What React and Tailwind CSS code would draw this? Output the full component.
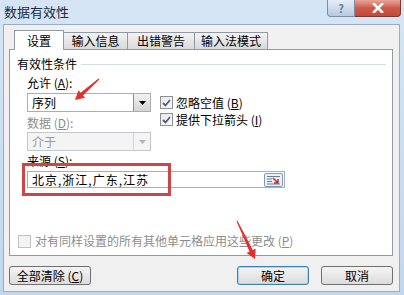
const font = { fontFamily: '"Noto Sans CJK SC", "Liberation Sans", sans-serif' }

function arrowPoints(tx, ty, hx, hy, headLen = 9, headW = 5, tailW = 0.6, neckW = 1.8) {
  const dx = hx - tx
  const dy = hy - ty
  const len = Math.hypot(dx, dy)
  const ux = dx / len
  const uy = dy / len
  const nx = -uy
  const ny = ux
  const bx = hx - ux * headLen
  const by = hy - uy * headLen
  const p = (x, y) => `${x.toFixed(1)},${y.toFixed(1)}`
  return [
    p(tx + nx * tailW, ty + ny * tailW),
    p(bx + nx * neckW, by + ny * neckW),
    p(bx + nx * headW, by + ny * headW),
    p(hx, hy),
    p(bx - nx * headW, by - ny * headW),
    p(bx - nx * neckW, by - ny * neckW),
    p(tx - nx * tailW, ty - ny * tailW),
  ].join(' ')
}

export default function App() {
  return (
    <div
      className="relative w-[404px] h-[295px] flex flex-col bg-gradient-to-b from-[#d6e5f6] to-[#c2d6ee] text-[12px] text-black overflow-hidden"
      style={font}
    >
      <TitleBar />

      <div className="flex-1 ml-[3px] mr-[4px] mb-[3px] border border-[#9aabc2] bg-[#f0f0f0] flex flex-col pl-[5px] pr-[6px]">
        <Tabs />

        <div className="h-[207px] bg-white border border-[#8e9aa6] flex flex-col pl-[7px] pr-[6px]">
          <div className="mt-[7px] flex items-center h-[14px]">
            <span className="leading-[14px]">有效性条件</span>
            <div className="flex-1 ml-[4px] border-t border-[#d5dde4]" />
          </div>

          <div className="pl-[10px] flex">
            <div className="w-[124px] flex flex-col">
              <span className="mt-[5px] leading-[14px] h-[14px]">
                允许 (<u>A</u>):
              </span>
              <Select value="序列" className="mt-[3px]" />
              <span className="mt-[4px] leading-[14px] h-[14px] text-[#8d8d8d]">
                数据 (<u>D</u>):
              </span>
              <Select value="介于" disabled className="mt-[2px]" />
              <span className="mt-[3px] leading-[14px] h-[14px]">
                来源 (<u>S</u>):
              </span>
            </div>
            <div className="ml-[9px] pt-[23px] flex flex-col">
              <Check label="忽略空值" keyChar="B" checked />
              <Check label="提供下拉箭头" keyChar="I" checked />
            </div>
          </div>

          <div className="ml-[10px] mt-[3px] w-[258px] h-[17px] border border-[#abadb3] flex items-center pl-[4px] pr-[1px]">
            <span className="flex-1 leading-[14px] tracking-[1px]">北京,浙江,广东,江苏</span>
            <RefIcon />
          </div>

          <div className="mt-[45px] ml-[1px] flex items-center h-[16px]">
            <span className="w-[13px] h-[13px] border border-[#c2c2c2] bg-[#f4f4f4]" />
            <span className="ml-[4px] leading-[14px] text-[#8d8d8d]">
              对有同样设置的所有其他单元格应用这些更改 (<u>P</u>)
            </span>
          </div>
        </div>

        <div className="mt-[10px] flex items-center">
          <Button className="w-[82px]">
            全部清除 (<u>C</u>)
          </Button>
          <Button className="w-[72px] ml-auto" primary>
            确定
          </Button>
          <Button className="w-[72px] ml-[12px]">取消</Button>
        </div>
      </div>

      {/* annotations */}
      <div className="absolute left-[22px] top-[163px] w-[149px] h-[33px] border-[3px] border-[#cf4547] pointer-events-none" />
      <svg className="absolute inset-0 pointer-events-none" width="404" height="295">
        <polygon points={arrowPoints(99, 79, 75, 100)} fill="#e2302c" />
        <polygon points={arrowPoints(237, 221, 255, 259)} fill="#e2302c" />
      </svg>
    </div>
  )
}

function TitleBar() {
  return (
    <div className="h-[24px] flex items-start shrink-0">
      <span className="ml-[4px] mt-[5px] leading-[14px] text-[13px] text-[#1e2a3a]">数据有效性</span>
      <div className="ml-auto mr-[3px] flex">
        <div className="w-[28px] h-[17px] rounded-bl-[4px] border border-t-0 border-[#7d8ea5] bg-gradient-to-b from-[#e6eef8] to-[#b8c9de] flex items-center justify-center">
          <span className="text-[11px] leading-none font-bold text-[#6c7c90]">?</span>
        </div>
        <div className="w-[46px] h-[17px] rounded-br-[4px] border border-t-0 border-l-0 border-[#7a3b33] bg-gradient-to-b from-[#e6a59b] via-[#cc5a4a] to-[#c4493a] flex items-center justify-center">
          <svg width="12" height="10" viewBox="0 0 12 10">
            <path d="M2 1 L10 9 M10 1 L2 9" stroke="#ffffff" strokeWidth="2.6" strokeLinecap="square" />
          </svg>
        </div>
      </div>
    </div>
  )
}

function Tabs() {
  const tabs = [
    { label: '设置', w: 'w-[50px]', active: true },
    { label: '输入信息', w: 'w-[65px]' },
    { label: '出错警告', w: 'w-[68px]' },
    { label: '输入法模式', w: 'w-[74px]' },
  ]
  return (
    <div className="mt-[5px] h-[20px] flex items-end pl-[5px] -mb-px relative z-10">
      {tabs.map((t, i) =>
        t.active ? (
          <div
            key={i}
            className={`${t.w} h-[20px] bg-white border border-b-0 border-[#8e9aa6] flex items-center justify-center leading-[14px]`}
          >
            {t.label}
          </div>
        ) : (
          <div
            key={i}
            className={`${t.w} h-[18px] -ml-px border border-[#8e9aa6] border-b-[#8e9aa6] bg-gradient-to-b from-[#f3f3f3] to-[#dadada] flex items-center justify-center leading-[14px]`}
          >
            {t.label}
          </div>
        )
      )}
    </div>
  )
}

function Select({ value, disabled, className = '' }) {
  return (
    <div
      className={`${className} h-[19px] flex border ${
        disabled ? 'border-[#c3c6ca] bg-[#f4f4f4] text-[#9a9a9a]' : 'border-[#abadb3] bg-white'
      }`}
    >
      <span className="flex-1 pl-[4px] leading-[17px]">{value}</span>
      <div
        className={`w-[17px] h-full flex items-center justify-center border-l ${
          disabled ? 'border-[#d5d5d5] bg-[#f4f4f4]' : 'border-[#8f8f8f] bg-gradient-to-b from-[#f2f2f2] to-[#d4d4d4]'
        }`}
      >
        <svg width="7" height="4" viewBox="0 0 7 4">
          <path d="M0 0 H7 L3.5 4 Z" fill={disabled ? '#b5b5b5' : '#000000'} />
        </svg>
      </div>
    </div>
  )
}

function Check({ label, keyChar, checked }) {
  return (
    <div className="h-[17px] flex items-center">
      <span className="w-[13px] h-[13px] border border-[#8f8f8f] bg-gradient-to-br from-[#e8e8e8] to-[#fafafa] flex items-center justify-center">
        {checked && (
          <svg width="9" height="8" viewBox="0 0 9 8">
            <path d="M1 4 L3.5 6.5 L8 1" stroke="#4a5f85" strokeWidth="1.8" fill="none" />
          </svg>
        )}
      </span>
      <span className="ml-[3px] leading-[14px]">
        {label} (<u>{keyChar}</u>)
      </span>
    </div>
  )
}

function RefIcon() {
  return (
    <div className="w-[19px] h-[14px] border border-[#7b9cc2] rounded-[2px] bg-[#eaf1f9] flex items-center justify-center">
      <svg width="15" height="10" viewBox="0 0 15 10">
        <path d="M1 1.5 H14 M1 4 H6 M1 6.5 H6 M1 9 H14" stroke="#5f7fa8" strokeWidth="1" />
        <path d="M7 3 L12 8 M8 8 H12 V4" stroke="#c8312a" strokeWidth="1.6" fill="none" />
      </svg>
    </div>
  )
}

function Button({ children, className = '', primary }) {
  return (
    <div
      className={`${className} h-[19px] rounded-[3px] border ${
        primary ? 'border-[#3c7fb1] shadow-[inset_0_0_0_1px_#a6d8f5]' : 'border-[#707070]'
      } bg-gradient-to-b from-[#f4f4f4] to-[#dcdcdc] flex items-center justify-center leading-[14px]`}
    >
      {children}
    </div>
  )
}
